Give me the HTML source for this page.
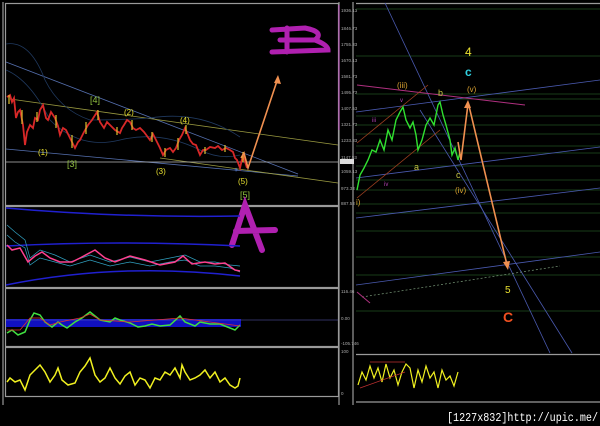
<!DOCTYPE html>
<html><head><meta charset="utf-8"><style>
html,body{margin:0;padding:0;background:#000;width:600px;height:426px;overflow:hidden}
svg{display:block}
</style></head><body>
<svg width="600" height="426" viewBox="0 0 600 426" xmlns="http://www.w3.org/2000/svg" font-family="Liberation Sans, sans-serif">
<rect width="600" height="426" fill="#000"/>
<g stroke="#9a9a9a" stroke-width="1.2" fill="none">
<rect x="5.5" y="3.5" width="333" height="202"/>
<rect x="5.5" y="206.5" width="333" height="81"/>
<rect x="5.5" y="288.5" width="333" height="58"/>
<rect x="5.5" y="347.5" width="333" height="49"/>
<line x1="3" y1="2" x2="3" y2="405"/>
<line x1="339" y1="2" x2="339" y2="405"/>
<line x1="353" y1="2" x2="353" y2="405"/>
<line x1="356" y1="3.5" x2="600" y2="3.5"/>
<line x1="356" y1="354.5" x2="600" y2="354.5"/>
<line x1="356" y1="402" x2="600" y2="402"/>
</g>
<line x1="339" y1="5" x2="339" y2="130" stroke="#c050c0" stroke-width="1"/>
<g font-size="4.5" fill="#aaa">
<text x="341" y="12">1936.13</text><text x="341" y="30">1846.73</text><text x="341" y="46">1755.33</text>
<text x="341" y="62">1670.13</text><text x="341" y="78">1581.73</text><text x="341" y="94">1495.73</text>
<text x="341" y="110">1407.53</text><text x="341" y="126">1321.73</text><text x="341" y="142">1233.33</text>
<text x="341" y="159">1147.53</text><text x="341" y="173">1059.13</text><text x="341" y="190">973.33</text>
<text x="341" y="205">887.53</text><text x="341" y="293">116.46</text><text x="341" y="320">0.00</text>
<text x="341" y="345">-105.746</text><text x="341" y="353">100</text><text x="341" y="395">0</text>
</g>
<rect x="340" y="159" width="14" height="5" fill="#ddd"/>
<g fill="none" stroke-width="0.8">
<line x1="6" y1="62" x2="298" y2="174" stroke="#5570b0"/>
<line x1="6" y1="149" x2="298" y2="176" stroke="#5570b0"/>
<line x1="10" y1="99" x2="338" y2="145" stroke="#9a9a40"/>
<line x1="160" y1="158" x2="338" y2="183" stroke="#9a9a40"/>
<line x1="6" y1="162" x2="338" y2="162" stroke="#bbb"/>
<path d="M6,44 Q30,40 45,80 Q60,110 90,120 Q120,120 150,118 Q200,110 240,137" stroke="#203a60"/>
<path d="M6,70 Q30,80 50,120 Q80,150 120,140 Q160,130 200,150 Q220,160 240,155" stroke="#203a60"/>
</g>
<polyline fill="none" stroke="#d82828" stroke-width="1.8" points="7,97 10,95 12,102 14,98 16,118 18,112 20,110 23,125 25,145 27,132 30,125 33,128 35,118 38,120 40,110 43,105 46,118 48,120 51,112 55,118 58,126 60,135 63,128 66,130 70,138 75,148 78,142 80,140 84,132 88,125 92,120 97,112 100,122 104,128 107,122 110,125 115,130 120,133 122,128 124,125 127,120 130,122 133,128 136,130 140,128 144,132 147,136 150,140 153,134 155,138 158,144 160,148 163,155 166,150 170,148 173,152 176,148 179,140 182,135 185,128 188,135 190,140 193,144 196,145 198,150 200,155 203,150 206,150 210,147 215,148 218,146 222,150 226,148 230,150 233,152 235,158 237,160 240,168 243,155 247,168"/>
<g stroke="#e0c030" stroke-width="1.2">
<line x1="9" y1="95" x2="9" y2="104"/><line x1="22" y1="110" x2="22" y2="124"/><line x1="37" y1="112" x2="37" y2="122"/>
<line x1="56" y1="115" x2="56" y2="128"/><line x1="72" y1="135" x2="72" y2="148"/><line x1="86" y1="122" x2="86" y2="134"/>
<line x1="98" y1="110" x2="98" y2="120"/><line x1="117" y1="127" x2="117" y2="135"/><line x1="132" y1="120" x2="132" y2="130"/>
<line x1="152" y1="132" x2="152" y2="142"/><line x1="165" y1="148" x2="165" y2="157"/><line x1="178" y1="138" x2="178" y2="150"/>
<line x1="186" y1="125" x2="186" y2="134"/><line x1="205" y1="147" x2="205" y2="154"/><line x1="225" y1="145" x2="225" y2="152"/>
<line x1="243" y1="152" x2="243" y2="162"/>
</g>
<polyline fill="none" stroke="#f09050" stroke-width="1.6" points="241,158 244,153 248,168 278,78"/>
<polygon points="278,75 274,83 281,84" fill="#f09050"/>
<text x="234" y="172" font-size="7" fill="#5a90ff">+</text>
<g fill="#e8e030" font-size="8">
<text x="38" y="155">(1)</text><text x="124" y="115">(2)</text><text x="156" y="174">(3)</text>
<text x="180" y="123">(4)</text><text x="238" y="184">(5)</text>
</g>
<g fill="#90c040" font-size="9">
<text x="90" y="103">[4]</text><text x="67" y="167">[3]</text><text x="240" y="198">[5]</text>
</g>
<path d="M272,30 L305,28 Q325,32 315,40 Q328,45 328,50 L272,52 M287,28 L287,52 M280,40 L314,40" stroke="#b020b0" stroke-width="5" fill="none" stroke-linecap="round"/>
<path d="M232,245 L245,205 L262,250 M236,231 L275,230" stroke="#b020b0" stroke-width="6" fill="none" stroke-linecap="round"/>
<g fill="none">
<path d="M6,208 Q120,218 240,216" stroke="#2020d0" stroke-width="1.5"/>
<path d="M6,246 Q120,240 240,246" stroke="#2020d0" stroke-width="1.5"/>
<path d="M6,285 Q120,262 240,276" stroke="#2020d0" stroke-width="1.5"/>
<polyline stroke="#30a0c0" stroke-width="0.7" points="7,225 15,232 25,240 30,258 40,250 55,255 70,262 90,255 110,262 130,257 150,262 170,258 185,255 200,262 215,262 230,265 240,266"/>
<polyline stroke="#30a0c0" stroke-width="0.7" points="7,235 15,242 25,248 30,265 40,258 55,262 70,266 90,260 110,266 130,262 150,266 170,262 185,260 200,266 215,266 230,268 240,272"/>
<polyline stroke="#ff4090" stroke-width="1.5" points="7,245 12,250 20,248 28,262 35,256 42,252 50,258 60,262 72,262 80,258 95,250 105,258 115,262 130,256 145,260 160,265 175,262 183,256 192,264 205,262 215,264 225,263 235,270 240,271"/>
</g>
<rect x="6" y="319" width="235" height="8" fill="#1010c0"/>
<line x1="6" y1="320" x2="338" y2="320" stroke="#6060c0" stroke-width="0.6"/>
<polyline fill="none" stroke="#40e040" stroke-width="1.5" points="7,333 12,330 18,335 25,332 30,320 34,313 40,315 45,322 52,327 58,322 62,325 67,328 75,322 82,318 90,312 95,316 100,320 110,322 115,318 120,320 130,323 138,327 145,326 152,324 160,326 170,325 180,316 185,322 195,326 200,322 210,324 220,324 230,328 235,330 240,325"/>
<polyline fill="none" stroke="#e03030" stroke-width="0.8" points="7,330 20,330 30,318 40,318 50,325 60,322 80,318 90,314 100,320 130,322 180,318 240,326"/>
<polyline fill="none" stroke="#f0f020" stroke-width="1.5" points="7,382 10,378 15,382 20,380 25,390 30,375 35,370 40,365 45,372 50,382 55,375 58,368 62,380 68,385 75,383 80,372 85,366 90,358 95,375 100,382 105,378 110,368 115,378 120,384 125,376 130,372 135,385 140,378 145,380 150,388 155,378 160,380 165,372 170,375 175,368 180,378 182,365 185,372 190,380 195,378 200,375 205,370 210,378 215,372 220,382 225,378 230,385 235,388 238,386 240,378"/>
<g stroke="#1f4f1f" stroke-width="0.8">
<line x1="356" y1="9" x2="600" y2="9"/><line x1="356" y1="56" x2="600" y2="56"/>
<line x1="356" y1="94" x2="600" y2="94"/><line x1="460" y1="99" x2="600" y2="99"/>
<line x1="356" y1="116" x2="600" y2="116"/><line x1="356" y1="125" x2="600" y2="125"/>
<line x1="356" y1="134" x2="600" y2="134"/><line x1="356" y1="146" x2="600" y2="146"/>
<line x1="356" y1="153" x2="600" y2="153"/><line x1="356" y1="166" x2="600" y2="166"/>
<line x1="356" y1="180" x2="600" y2="180"/><line x1="356" y1="190" x2="600" y2="190"/>
<line x1="356" y1="204" x2="600" y2="204"/><line x1="356" y1="213" x2="600" y2="213"/>
<line x1="356" y1="231" x2="600" y2="231"/><line x1="356" y1="257" x2="600" y2="257"/>
<line x1="356" y1="275" x2="600" y2="275"/><line x1="356" y1="311" x2="600" y2="311"/>
</g>
<g stroke="#4a5ab0" stroke-width="0.8" fill="none">
<line x1="385" y1="3" x2="550" y2="353"/><line x1="420" y1="110" x2="572" y2="353"/>
<line x1="356" y1="112" x2="600" y2="80"/><line x1="356" y1="178" x2="600" y2="147"/>
<line x1="356" y1="218" x2="600" y2="188"/><line x1="356" y1="285" x2="600" y2="252"/>
</g>
<line x1="362" y1="297" x2="560" y2="266" stroke="#7a9a7a" stroke-width="0.7" stroke-dasharray="2,2"/>
<line x1="357" y1="85" x2="525" y2="105" stroke="#b03080" stroke-width="1"/>
<line x1="357" y1="292" x2="370" y2="303" stroke="#b03080" stroke-width="1"/>
<line x1="357" y1="143" x2="428" y2="85" stroke="#a04020" stroke-width="0.8"/>
<line x1="357" y1="198" x2="440" y2="130" stroke="#a04020" stroke-width="0.8"/>
<polyline fill="none" stroke="#30e030" stroke-width="1.4" points="357,190 360,175 364,168 368,160 372,150 376,152 380,140 384,150 388,130 392,140 396,120 400,112 403,107 406,120 410,128 413,122 416,135 418,150 422,140 426,125 430,118 434,125 438,105 440,102 443,115 446,125 450,140 452,155 455,148 458,160 460,152"/>
<polyline fill="none" stroke="#f09050" stroke-width="1.6" points="458,142 461,160 468,104"/>
<polygon points="468,100 464,108 471,108" fill="#f09050"/>
<line x1="469" y1="106" x2="507" y2="265" stroke="#f09050" stroke-width="1.6"/>
<polygon points="508,270 503,262 510,261" fill="#f09050"/>
<g font-size="9">
<text x="465" y="56" fill="#e8e030" font-size="12">4</text>
<text x="465" y="76" fill="#30d0e0" font-size="12" font-weight="bold">c</text>
<text x="467" y="92" fill="#d8a030" font-size="8">(v)</text>
<text x="397" y="88" fill="#d8a030" font-size="8">(iii)</text>
<text x="438" y="96" fill="#c0c040">b</text>
<text x="414" y="170" fill="#c0c040">a</text>
<text x="456" y="178" fill="#c0c040">c</text>
<text x="455" y="193" fill="#d8a030" font-size="8">(iv)</text>
<text x="400" y="102" fill="#b040b0" font-size="6">v</text>
<text x="372" y="122" fill="#b040b0" font-size="6">iii</text>
<text x="384" y="186" fill="#b040b0" font-size="6">iv</text>
<text x="356" y="205" fill="#d8a030" font-size="8">i)</text>
<text x="505" y="293" fill="#e8e030" font-size="10">5</text>
<text x="503" y="322" fill="#f05020" font-size="14" font-weight="bold">C</text>
</g>
<polyline fill="none" stroke="#f0f020" stroke-width="1.2" points="358,385 362,372 366,380 370,366 374,378 378,368 382,382 386,364 390,378 394,370 398,385 402,372 406,364 410,368 414,388 418,370 422,382 426,366 430,378 434,372 438,388 442,370 446,380 450,376 454,386 458,372"/>
<line x1="360" y1="388" x2="405" y2="372" stroke="#c03030" stroke-width="0.7"/>
<line x1="370" y1="362" x2="405" y2="362" stroke="#c03030" stroke-width="0.7"/>
<text x="447" y="421" font-size="12" fill="#fff" font-family="Liberation Mono, monospace" textLength="151" lengthAdjust="spacingAndGlyphs">[1227x832]http://upic.me/</text>
</svg>
</body></html>
